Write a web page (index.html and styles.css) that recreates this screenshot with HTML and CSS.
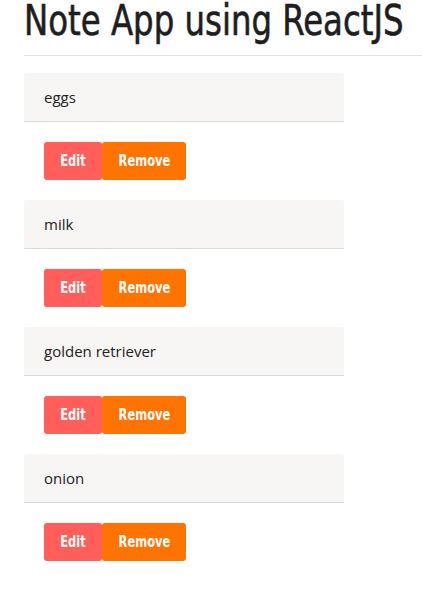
FILE: index.html
```html
<!DOCTYPE html>
<html>
<head>
<meta charset="utf-8">
<link rel="stylesheet" href="styles.css">
</head>
<body>
<div class="app">
  <h1 class="title"><span class="title-text">Note App using ReactJS</span></h1>
  <hr class="rule">
  <div class="notes">
    <div class="note">
      <div class="note-text">eggs</div>
      <div class="actions"><button class="btn edit"><span class="btn-label">Edit</span></button><button class="btn remove"><span class="btn-label">Remove</span></button></div>
    </div>
    <div class="note">
      <div class="note-text">milk</div>
      <div class="actions"><button class="btn edit"><span class="btn-label">Edit</span></button><button class="btn remove"><span class="btn-label">Remove</span></button></div>
    </div>
    <div class="note">
      <div class="note-text">golden retriever</div>
      <div class="actions"><button class="btn edit"><span class="btn-label">Edit</span></button><button class="btn remove"><span class="btn-label">Remove</span></button></div>
    </div>
    <div class="note">
      <div class="note-text">onion</div>
      <div class="actions"><button class="btn edit"><span class="btn-label">Edit</span></button><button class="btn remove"><span class="btn-label">Remove</span></button></div>
    </div>
  </div>
</div>
</body>
</html>
```
FILE: styles.css
```css
html, body {
  margin: 0;
  padding: 0;
  background: #fff;
}
.app {
  padding-left: 24px;
  font-family: "Open Sans", "Segoe UI", sans-serif;
  color: #222;
}
.title {
  margin: 0;
  height: 44px;
  white-space: nowrap;
  font-family: "DejaVu Sans", sans-serif;
  font-stretch: condensed;
  font-weight: normal;
  font-size: 36px;
  line-height: 36px;
  color: #1e1e1e;
  -webkit-text-stroke: 0.5px #1e1e1e;
}
.title-text {
  display: inline-block;
  line-height: 36px;
  transform: scaleY(1.17);
  transform-origin: 0 0;
}
.rule {
  margin: 11px 0 0 0;
  border: 0;
  border-top: 1px solid #e5e5e5;
  height: 0;
}
.notes {
  padding-top: 17px;
  display: flex;
  flex-direction: column;
  gap: 20px;
}
.note {
  display: flex;
  flex-direction: column;
  gap: 20px;
}
.note-text {
  width: 320px;
  box-sizing: border-box;
  height: 49px;
  padding: 0 20px;
  display: flex;
  align-items: center;
  background: #f7f6f4;
  border-bottom: 1px solid #d9d9d9;
  border-radius: 3px 3px 0 0;
  font-size: 15px;
  color: #222;
}
.actions {
  display: flex;
  padding-left: 20px;
}
.btn {
  border: 0;
  height: 38px;
  border-radius: 3px;
  color: #fff;
  font-family: "DejaVu Sans", sans-serif;
  font-stretch: condensed;
  font-weight: bold;
  font-size: 15px;
  padding: 0;
  cursor: pointer;
  display: flex;
  align-items: center;
  justify-content: center;
}
.btn-label {
  display: inline-block;
  transform: scaleX(0.85);
}
.edit {
  width: 58px;
  background: #ff5e5a;
}
.remove {
  width: 84px;
  background: #ff7300;
}
```
